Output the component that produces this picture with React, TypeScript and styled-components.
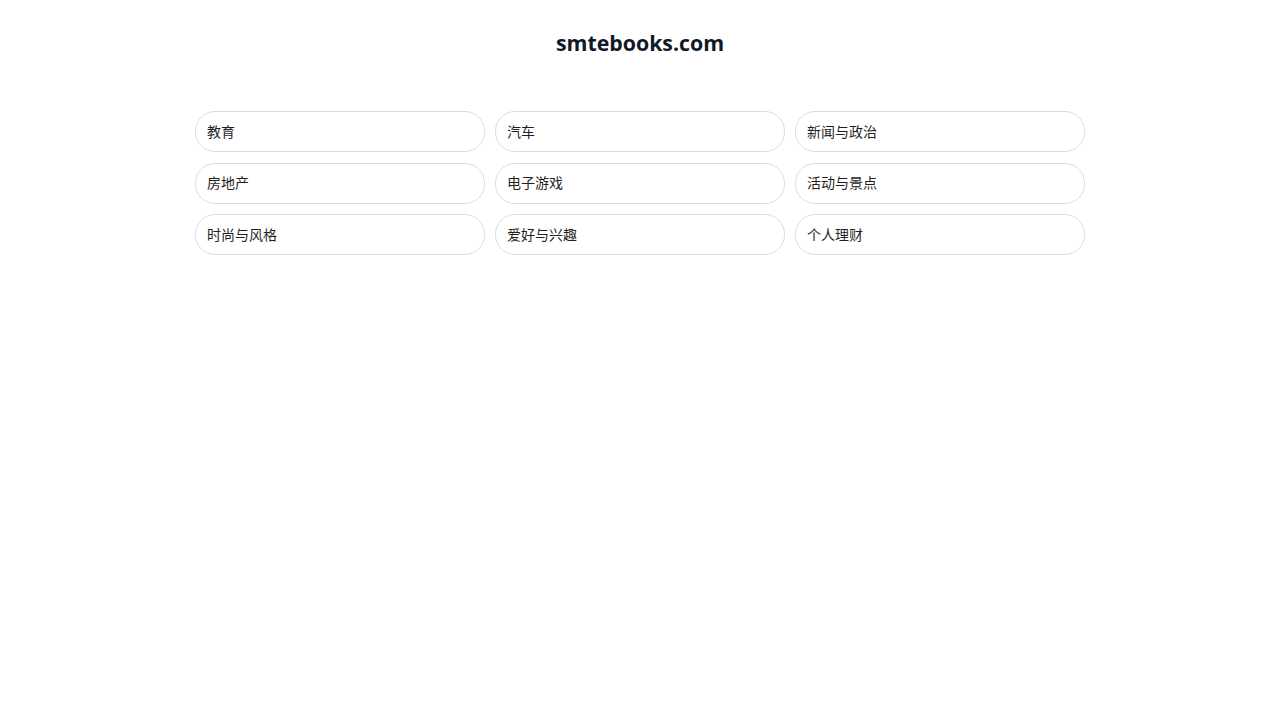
import styled, { createGlobalStyle } from "styled-components";

const categories = [
  "教育",
  "汽车",
  "新闻与政治",
  "房地产",
  "电子游戏",
  "活动与景点",
  "时尚与风格",
  "爱好与兴趣",
  "个人理财",
];

const GlobalStyle = createGlobalStyle`
  body {
    margin: 0;
    background: #ffffff;
    font-family: "Open Sans", "Noto Sans CJK SC", sans-serif;
  }
`;

export default function App() {
  return (
    <>
      <GlobalStyle />
      <Page>
        <Title>smtebooks.com</Title>
        <Grid>
          {categories.map((c) => (
            <Card key={c}>{c}</Card>
          ))}
        </Grid>
      </Page>
    </>
  );
}

const Page = styled.main`
  width: 890px;
  margin: 0 auto;
  padding-top: 29px;
`;

const Title = styled.h1`
  margin: 0;
  text-align: center;
  font-family: "Open Sans", sans-serif;
  font-weight: 700;
  font-size: 21.3px;
  line-height: 28px;
  color: #111827;
`;

const Grid = styled.div`
  display: grid;
  grid-template-columns: repeat(3, 1fr);
  column-gap: 10px;
  row-gap: 10.5px;
  margin-top: 54px;
`;

const Card = styled.div`
  box-sizing: border-box;
  height: 41px;
  display: flex;
  align-items: center;
  padding: 0 11px 2px;
  border: 1px solid #dcdcdc;
  border-radius: 20px;
  font-family: "Open Sans", "Noto Sans CJK SC", sans-serif;
  font-size: 14px;
  color: #1f1f1f;
`;
